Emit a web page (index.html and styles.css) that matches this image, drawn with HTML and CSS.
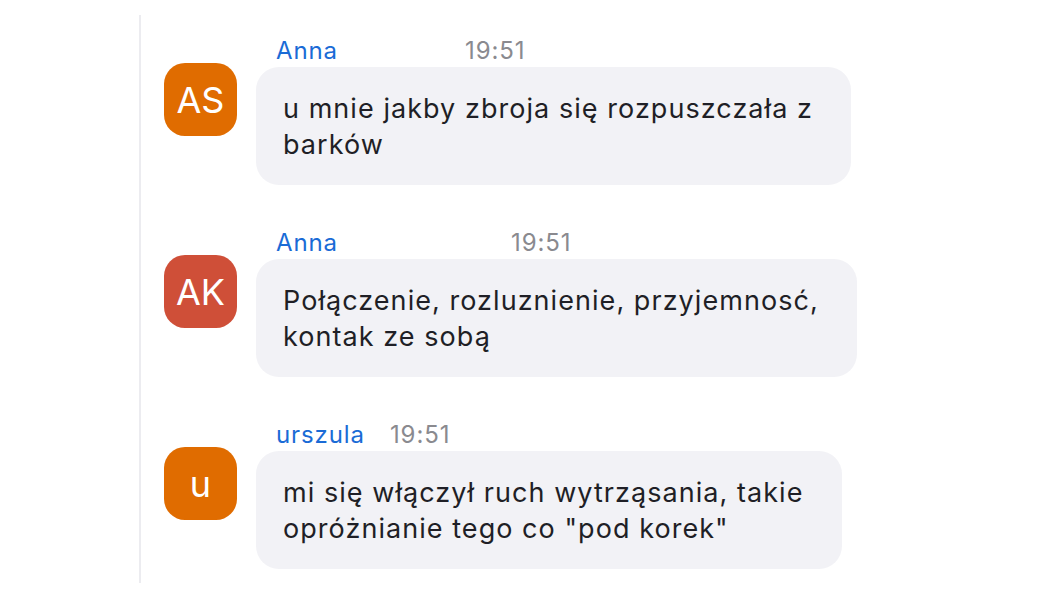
FILE: index.html
```html
<!DOCTYPE html>
<html lang="pl">
<head>
<meta charset="utf-8">
<link rel="stylesheet" href="styles.css">
</head>
<body>
<div class="chat">
  <div class="msg">
    <div class="avatar orange">AS</div>
    <div class="content">
      <div class="head"><span class="name">Anna</span><span class="time time-a">19:51</span></div>
      <div class="bubble">u mnie jakby zbroja się rozpuszczała z<br>barków</div>
    </div>
  </div>
  <div class="msg">
    <div class="avatar red">AK</div>
    <div class="content">
      <div class="head"><span class="name">Anna</span><span class="time time-b">19:51</span></div>
      <div class="bubble">Połączenie, rozluznienie, przyjemnosć,<br>kontak ze sobą</div>
    </div>
  </div>
  <div class="msg">
    <div class="avatar orange">u</div>
    <div class="content">
      <div class="head"><span class="name">urszula</span><span class="time time-c">19:51</span></div>
      <div class="bubble">mi się włączył ruch wytrząsania, takie<br>opróżnianie tego co "pod korek"</div>
    </div>
  </div>
</div>
</body>
</html>
```
FILE: styles.css
```css
html, body {
  margin: 0;
  padding: 0;
  background: #ffffff;
}
body {
  width: 1050px;
  height: 600px;
  overflow: hidden;
  font-family: Inter, "Noto Sans", "Liberation Sans", sans-serif;
}
.chat {
  margin: 15px 0 0 139px;
  border-left: 2px solid #ececf0;
  height: 568px;
  padding: 20px 0 0 23px;
  display: flex;
  flex-direction: column;
  gap: 42px;
  box-sizing: border-box;
}
.msg {
  display: flex;
  gap: 19px;
}
.avatar {
  width: 73px;
  height: 73px;
  border-radius: 21px;
  margin-top: 28px;
  color: #ffffff;
  font-size: 36px;
  display: flex;
  align-items: center;
  justify-content: center;
  flex-shrink: 0;
}
.orange { background: #e06c00; }
.red { background: #cf4f38; }
.content {
  display: flex;
  flex-direction: column;
}
.head {
  height: 32px;
  padding-left: 20px;
  display: flex;
  align-items: center;
  font-size: 24px;
  line-height: 28px;
  letter-spacing: 0.9px;
}
.name { color: #1a6bd6; }
.time { color: #8a8a8f; }
.time-a { margin-left: 127px; }
.time-b { margin-left: 173px; }
.time-c { margin-left: 25px; }
.bubble {
  width: fit-content;
  background: #f2f2f6;
  border-radius: 23px;
  padding: 24px 38px 22px 27px;
  font-size: 27px;
  line-height: 36px;
  letter-spacing: 1.05px;
  color: #1f1f26;
}
```
